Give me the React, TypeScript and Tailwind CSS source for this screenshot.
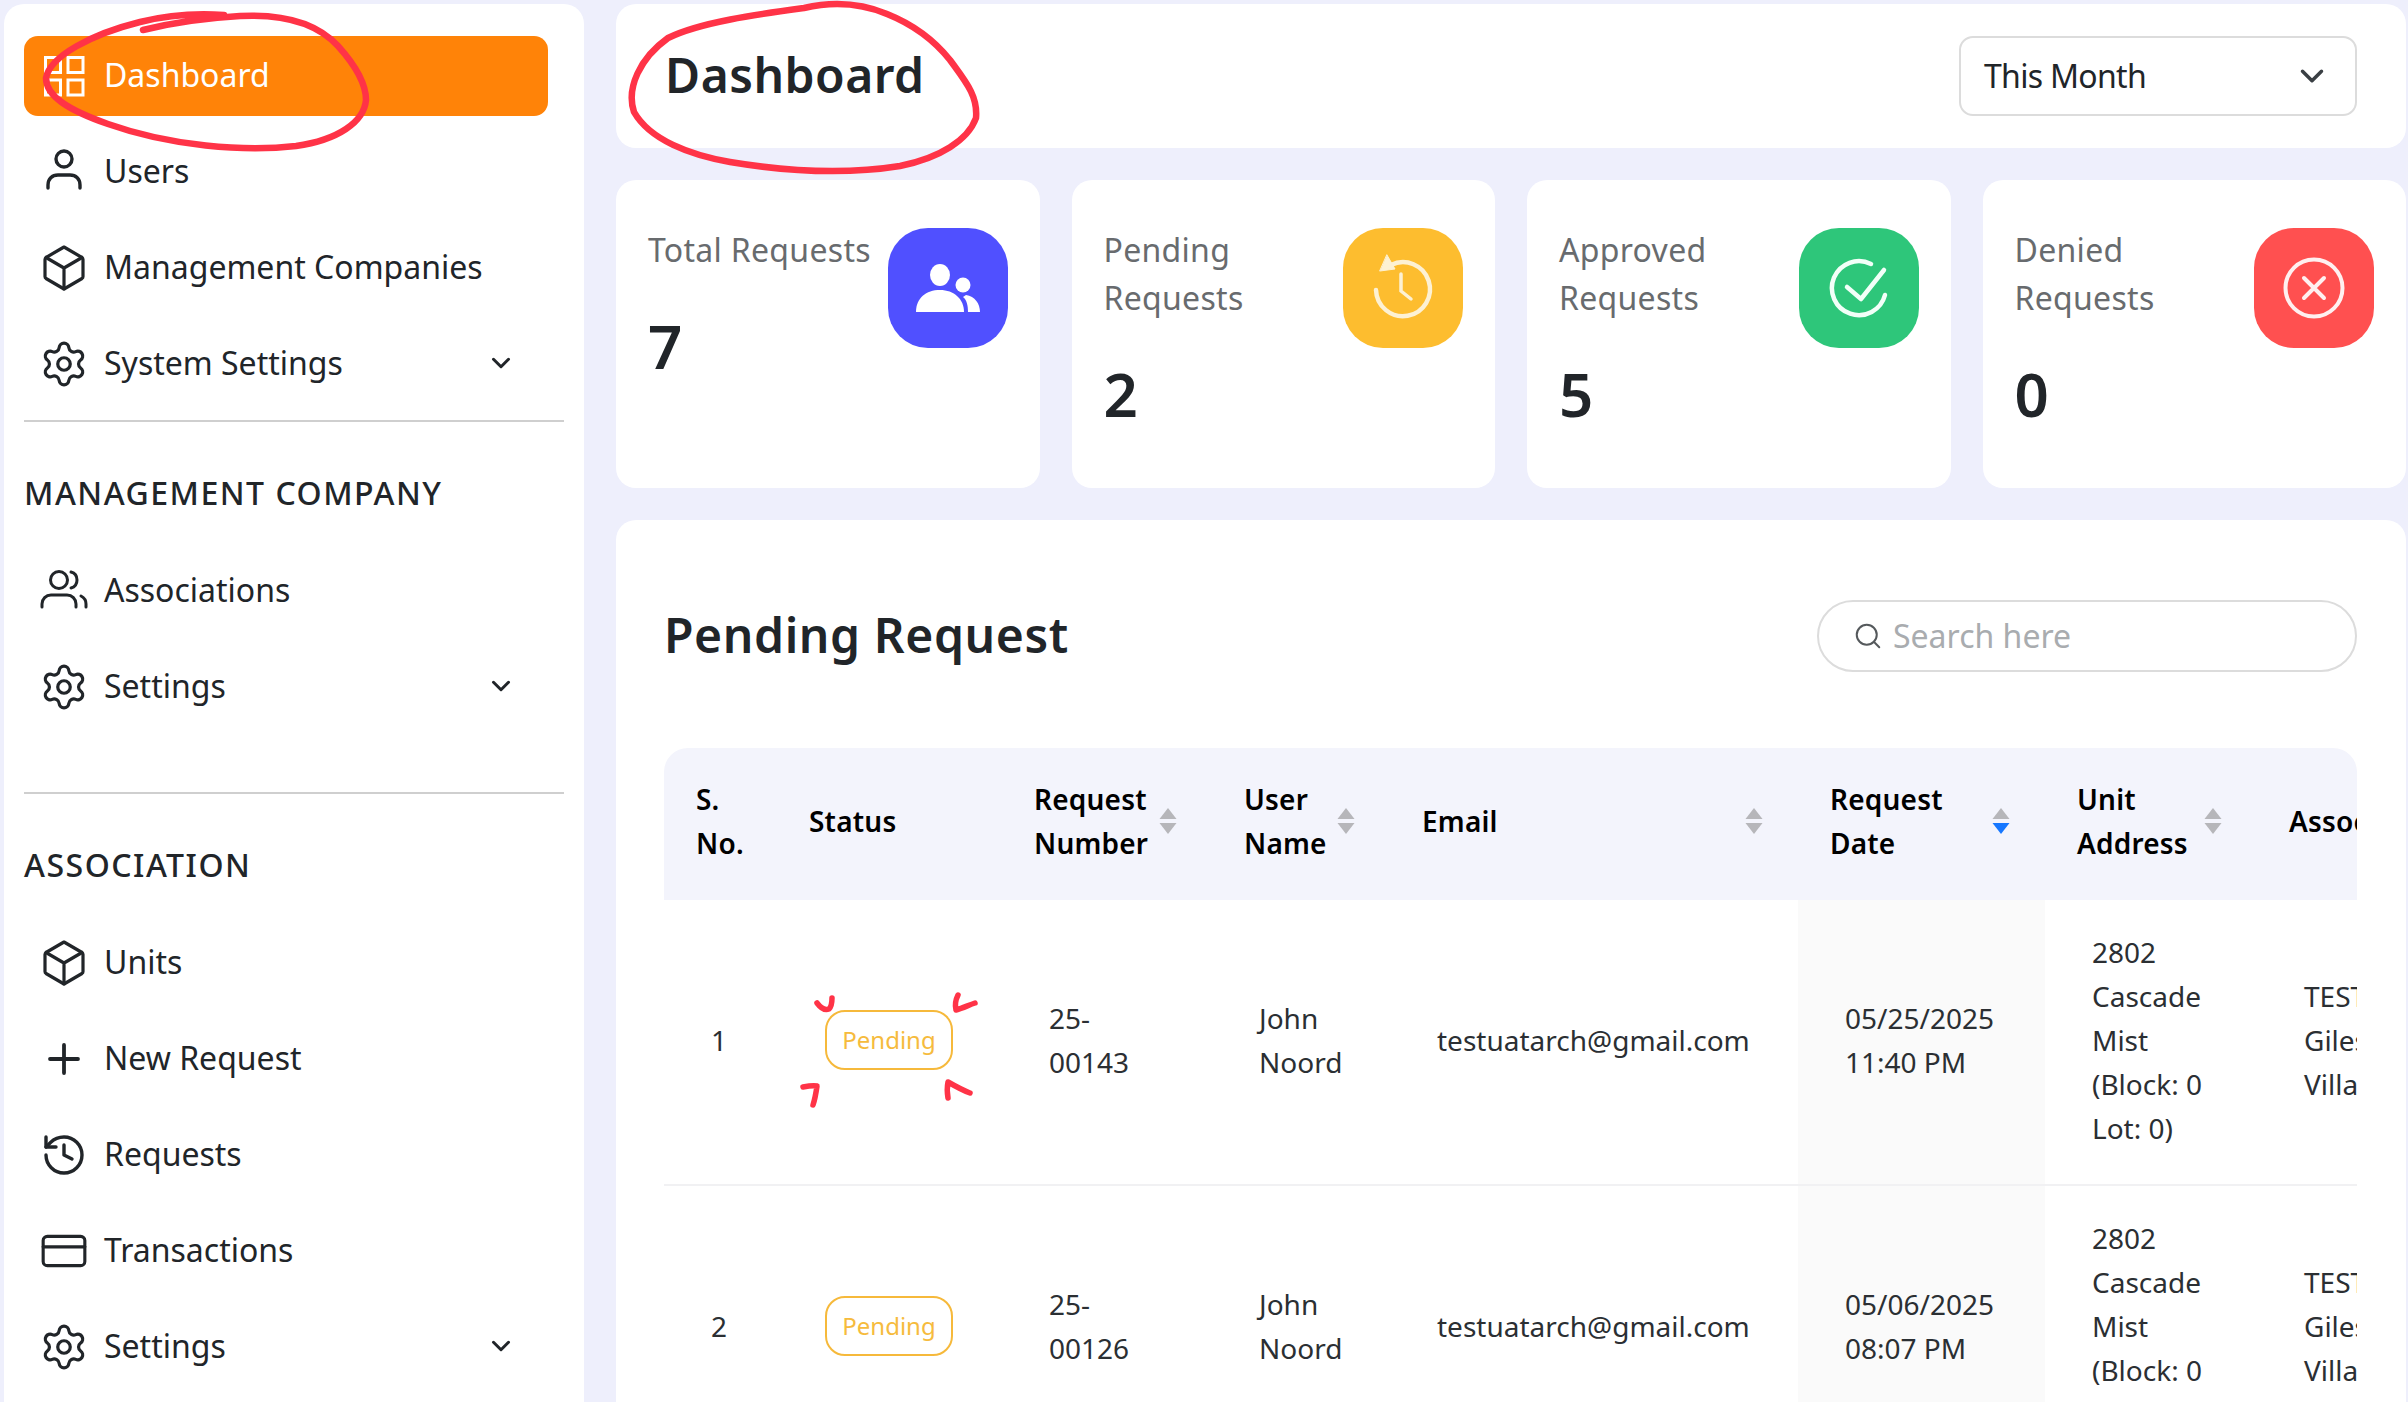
import React from "react";
import { Settings, ChevronDown, Plus, History, CreditCard, Search } from "lucide-react";

const DashIcon = () => (
  <svg width="48" height="48" viewBox="0 0 48 48" fill="none" stroke="#fff" strokeWidth="3" className="shrink-0">
    <rect x="5.5" y="5.5" width="15" height="15" />
    <rect x="28" y="5.5" width="15" height="15" />
    <rect x="5.5" y="28" width="15" height="15" />
    <rect x="28" y="28" width="15" height="15" />
  </svg>
);
const UserIcon = () => (
  <svg width="48" height="48" viewBox="0 0 48 48" fill="none" stroke="#212529" strokeWidth="3.4" strokeLinecap="round" className="shrink-0">
    <circle cx="24" cy="11" r="8" />
    <path d="M8 40v-3c0-6 4-10 10-10h12c6 0 10 4 10 10v3" />
  </svg>
);
const BoxIcon = () => (
  <svg width="48" height="48" viewBox="0 0 48 48" fill="none" stroke="#212529" strokeWidth="3.2" strokeLinejoin="round" strokeLinecap="round" className="shrink-0">
    <path d="M24 3 42 13.5c.8.5 1 1 1 2v17c0 1-.2 1.500-1 2L24 45 6 34.500c-.8-.5-1-1-1-2v-17c0-1 .2-1.500 1-2L24 3Z" />
    <path d="M6 13.500 24 24l18-10.500M24 24v21" />
  </svg>
);
const PeopleIcon = () => (
  <svg width="48" height="48" viewBox="0 0 48 48" fill="none" stroke="#212529" strokeWidth="3" strokeLinecap="round" className="shrink-0">
    <circle cx="19" cy="13" r="8.500" />
    <path d="M2 40v-3c0-5 4-9 9-9h16c5 0 9 4 9 9v3" />
    <path d="M31 5c4 1 6 4 6 8s-2 7-6 8M41 29c3 1.500 5 4 5 8v3" />
  </svg>
);

const SideItem = ({ icon, label, chevron, active }: { icon: React.ReactNode; label: string; chevron?: boolean; active?: boolean }) => (
  <div className={`flex h-20 mr-4 items-center gap-4 rounded-[14px] pl-4 pr-[32px] ${active ? "bg-[#ff8308] text-white" : "text-[#212529]"}`}>
    {icon}
    <span className="-mt-0.5 flex-1">{label}</span>
    {chevron && <ChevronDown size={30} strokeWidth={2.4} color="#212529" className="-mt-0.5" />}
  </div>
);

const gear = <Settings size={50} strokeWidth={1.55} color="#212529" className="shrink-0 -mx-px" />;

const Sidebar = () => (
  <aside className="w-[580px] shrink-0 rounded-t-[20px] bg-white pl-5 pr-5 pt-8 text-[32px] leading-[44px]">
    <div className="flex flex-col gap-4">
      <SideItem active icon={<DashIcon />} label="Dashboard" />
      <SideItem icon={<UserIcon />} label="Users" />
      <SideItem icon={<BoxIcon />} label="Management Companies" />
      <SideItem icon={gear} label="System Settings" chevron />
    </div>
    <div className="mt-4 h-0.5 bg-[#cfcfcf]" />
    <h3 className="mt-[49px] h-11 font-medium tracking-[1.5px] text-[#212529]">MANAGEMENT COMPANY</h3>
    <div className="mt-[36px] flex flex-col gap-4">
      <SideItem icon={<PeopleIcon />} label="Associations" />
      <SideItem icon={gear} label="Settings" chevron />
    </div>
    <div className="mt-[65px] h-0.5 bg-[#cfcfcf]" />
    <h3 className="mt-[49px] h-11 font-medium tracking-[1.5px] text-[#212529]">ASSOCIATION</h3>
    <div className="mt-[36px] flex flex-col gap-4">
      <SideItem icon={<BoxIcon />} label="Units" />
      <SideItem icon={<Plus size={48} strokeWidth={1.9} color="#212529" className="shrink-0" />} label="New Request" />
      <SideItem icon={<History size={48} strokeWidth={1.7} color="#212529" className="shrink-0" />} label="Requests" />
      <SideItem icon={<CreditCard size={50} strokeWidth={1.5} color="#212529" className="shrink-0 -mx-px" />} label="Transactions" />
      <SideItem icon={gear} label="Settings" chevron />
    </div>
  </aside>
);

const TileIcons: Record<string, React.ReactNode> = {
  people: (
    <svg width="120" height="120" viewBox="0 0 120 120" fill="#fff">
      <ellipse cx="52" cy="47" rx="10" ry="11" />
      <path d="M28 84c0-14 10-22 24-22s24 9 24 22Z" />
      <circle cx="75" cy="57" r="7.500" />
      <path d="M78 67c9 1 14 9 14 17H80c0-6-1-12-5-15Z" />
    </svg>
  ),
  clock: (
    <svg width="120" height="120" viewBox="0 0 120 120" fill="none" stroke="#fdf1d3" strokeWidth="4.500" strokeLinecap="round">
      <path d="M48 37A27 27 0 1 1 33 62" />
      <path d="M44 27 52 41 37 43Z" fill="#fdf1d3" strokeWidth="1" strokeLinejoin="round" />
      <path d="M58 46V63L68 71" strokeWidth="3.500" />
    </svg>
  ),
  check: (
    <svg width="120" height="120" viewBox="0 0 120 120" fill="none" stroke="#f2fff8" strokeWidth="4.500" strokeLinecap="round" strokeLinejoin="round">
      <path d="M72 36A27 27 0 1 0 86 67" />
      <path d="M48 59 62 71 85 42" />
    </svg>
  ),
  x: (
    <svg width="120" height="120" viewBox="0 0 120 120" fill="none" stroke="#fff0f0" strokeWidth="4" strokeLinecap="round">
      <circle cx="60" cy="60" r="28.500" />
      <path d="M50 50 70 70M70 50 50 70" />
    </svg>
  ),
};

const Stat = ({ label, value, color, icon }: { label: React.ReactNode; value: string; color: string; icon: string }) => (
  <div className="flex h-[308px] items-start justify-between rounded-[20px] bg-white pl-8 pr-8 pt-12">
    <div className="-mt-0.5">
      <div className="text-[32px] leading-[48px] tracking-[0.3px] text-[#686b6e]">{label}</div>
      <div className="mt-[36px] text-[60px] font-semibold leading-[72px] text-[#212529]">{value}</div>
    </div>
    <div className={`h-[120px] w-[120px] shrink-0 rounded-[40px] ${color}`}>{TileIcons[icon]}</div>
  </div>
);

const Sort = ({ active }: { active?: boolean }) => (
  <svg width="18" height="26" viewBox="0 0 18 26" className="shrink-0">
    <path d="M9 0 17.500 11H.5Z" fill="#b6b6ba" />
    <path d="M9 26 17.500 15H.5Z" fill={active ? "#1677ff" : "#b6b6ba"} />
  </svg>
);

const Th = ({ children, sort, active }: { children: React.ReactNode; sort?: boolean; active?: boolean }) => (
  <th className="bg-[#f3f4fc] pb-[35px] pl-8 pt-[29px] text-left align-middle text-[28px] font-semibold leading-[44px] tracking-[0.2px] text-black">
    <div className="flex items-center justify-between pr-[35px]">
      <div className="whitespace-nowrap">{children}</div>
      {sort && <Sort active={active} />}
    </div>
  </th>
);

const Lines = ({ lines }: { lines: string[] }) => (
  <>
    {lines.map((l) => (
      <div key={l} className="whitespace-nowrap">{l}</div>
    ))}
  </>
);

const rows = [
  { n: "1", req: ["25-", "00143"], date: ["05/25/2025", "11:40 PM"] },
  { n: "2", req: ["25-", "00126"], date: ["05/06/2025", "08:07 PM"] },
];

const td = "border-b-2 border-[#f1f1f3] pb-[34px] pl-[47px] pt-[30px] align-middle text-[28px] leading-[44px] text-[#2b2f33]";

const Table = () => (
  <div className="overflow-hidden rounded-t-[24px]">
    <table className="w-[1893px] table-fixed border-separate border-spacing-0">
      <colgroup>
        <col className="w-[113px]" />
        <col className="w-[225px]" />
        <col className="w-[210px]" />
        <col className="w-[178px]" />
        <col className="w-[408px]" />
        <col className="w-[247px]" />
        <col className="w-[212px]" />
        <col className="w-[300px]" />
      </colgroup>
      <thead>
        <tr>
          <Th>S.<br />No.</Th>
          <Th>Status</Th>
          <Th sort>Request<br />Number</Th>
          <Th sort>User<br />Name</Th>
          <Th sort>Email</Th>
          <Th sort active>Request<br />Date</Th>
          <Th sort>Unit<br />Address</Th>
          <Th>Associations</Th>
        </tr>
      </thead>
      <tbody>
        {rows.map((r) => (
          <tr key={r.n}>
            <td className={td}>{r.n}</td>
            <td className={td}>
              <div className="ml-px flex h-[60px] w-[128px] items-center justify-center rounded-[20px] border-2 border-[#f6b93b] text-[24px] text-[#f6bb3d]">Pending</div>
            </td>
            <td className={td}><Lines lines={r.req} /></td>
            <td className={td}><Lines lines={["John", "Noord"]} /></td>
            <td className={td}>testuatarch@gmail.com</td>
            <td className={`${td} bg-[#fafafa]`}><Lines lines={r.date} /></td>
            <td className={td}><Lines lines={["2802", "Cascade", "Mist", "(Block: 0", "Lot: 0)"]} /></td>
            <td className={td}><Lines lines={["TEST", "Giles", "Village"]} /></td>
          </tr>
        ))}
      </tbody>
    </table>
  </div>
);

const Annotations = () => (
  <svg className="pointer-events-none absolute left-0 top-0" width="2408" height="1402" viewBox="0 0 2408 1402" fill="none" stroke="#ff3347" strokeLinecap="round" strokeLinejoin="round">
    <g strokeWidth="6.500">
      <path d="M143 30C175 22 205 18 240 16C280 14 316 22 338 46C356 66 366 84 366 100C364 122 338 140 296 146C244 152 170 146 108 124C68 110 46 96 46 78C50 56 92 34 140 22C168 15 196 13 224 15" />
      <path d="M887 14C912 24 934 40 950 60C966 82 978 96 976 118C968 140 940 158 900 166C850 174 790 172 730 162C690 155 650 140 634 112C626 88 640 58 668 38C700 22 760 14 804 8C830 2 858 2 887 14" />
    </g>
    <g strokeWidth="5.500">
      <path d="M817 1003C820 1007 824 1011 829 1009C832 1006 832 1002 832 998" />
      <path d="M958 995C955 1001 955 1006 956 1010C963 1008 969 1005 975 1003" />
      <path d="M803 1087C808 1086 813 1085 817 1086C816 1093 815 1099 813 1105" />
      <path d="M948 1098C947 1092 947 1087 948 1082C955 1086 962 1090 970 1093" />
    </g>
  </svg>
);

export default function App() {
  return (
    <div className="relative flex h-[1402px] w-[2408px] gap-8 overflow-hidden bg-[#eeeffc] pl-1 pr-0.5 pt-1 font-['Noto_Sans','Lato',sans-serif]">
      <Sidebar />
      <main className="flex min-w-0 flex-1 flex-col gap-8">
        <header className="flex h-[144px] shrink-0 items-center justify-between rounded-[20px] bg-white pl-[49px] pr-[49px]">
          <h1 className="-mt-0.5 text-[48px] font-semibold tracking-[0.5px] text-[#212529]">Dashboard</h1>
          <div className="flex h-20 w-[398px] items-center justify-between rounded-[14px] border-2 border-[#dcdcdc] pl-[23px] pr-[24px] text-[32px] tracking-[-0.7px] text-[#212529]">
            This Month
            <ChevronDown size={38} strokeWidth={2.2} color="#3a3f44" />
          </div>
        </header>
        <section className="grid shrink-0 grid-cols-4 gap-8">
          <Stat label="Total Requests" value="7" color="bg-[#5050ff]" icon="people" />
          <Stat label={<>Pending<br />Requests</>} value="2" color="bg-[#fdbd2f]" icon="clock" />
          <Stat label={<>Approved<br />Requests</>} value="5" color="bg-[#2ec67a]" icon="check" />
          <Stat label={<>Denied<br />Requests</>} value="0" color="bg-[#ff5050]" icon="x" />
        </section>
        <section className="flex-1 rounded-t-[20px] bg-white pl-12 pr-[49px] pt-20">
          <div className="flex h-[72px] items-center justify-between">
            <h2 className="-mt-0.5 text-[48px] font-semibold tracking-[0.6px] text-[#212529]">Pending Request</h2>
            <div className="flex h-[72px] w-[540px] items-center gap-[10px] rounded-full border-2 border-[#dcdcdc] pl-[34px] text-[32px] text-[#a9acaf]">
              <Search size={30} strokeWidth={1.6} color="#55595c" />
              Search here
            </div>
          </div>
          <div className="mt-[76px]"><Table /></div>
        </section>
      </main>
      <Annotations />
    </div>
  );
}
